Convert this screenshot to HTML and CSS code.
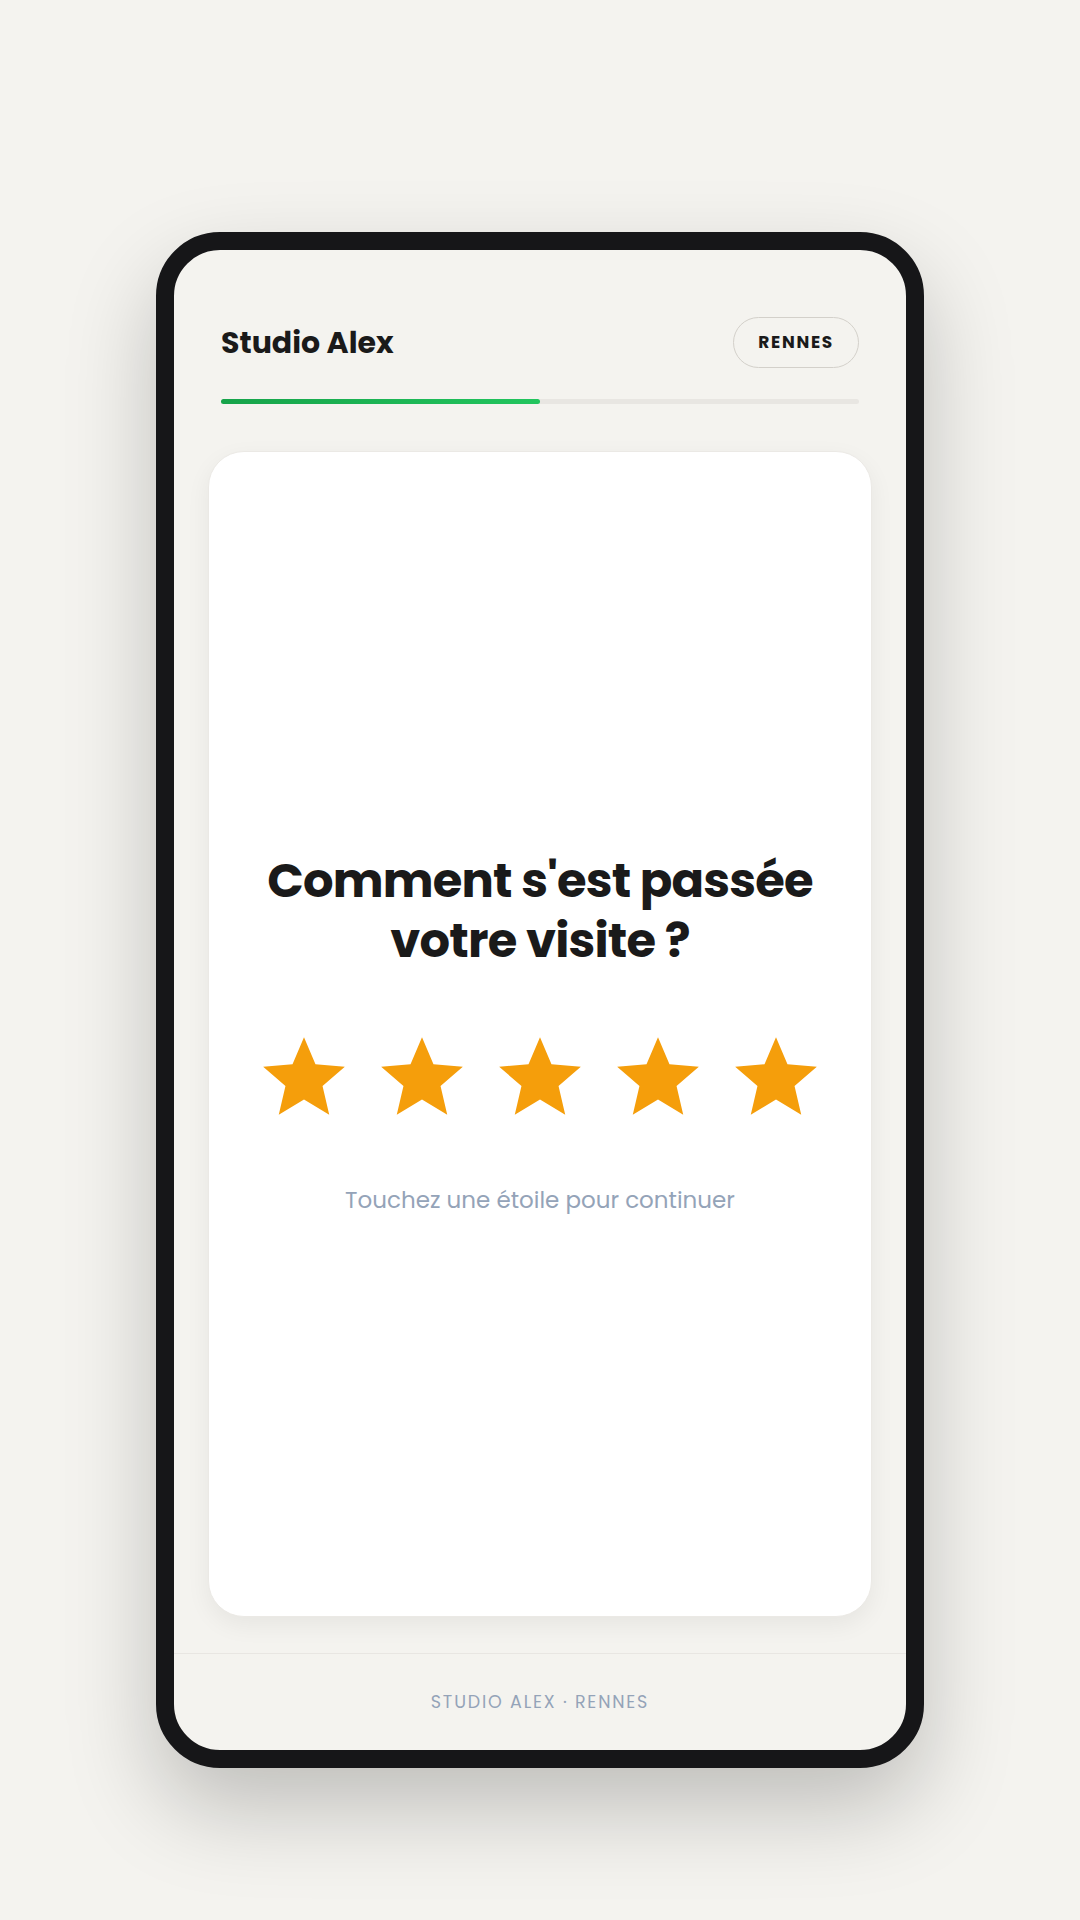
FILE: index.html
```html
<!DOCTYPE html>
<html lang="fr">
<head>
    <meta charset="UTF-8">
    <title>Studio Alex</title>
    <link rel="stylesheet" href="styles.css">
</head>
<body>
<div class="phone">
    <div class="top">
        <div class="bar">
            <h1 class="brand">Studio Alex</h1>
            <span class="city">RENNES</span>
        </div>
        <div class="progress"><div class="fill" style="width: 50%"></div></div>
    </div>
    <div class="main">
        <div class="card">
            <h2 class="question">Comment s'est passée<br>votre visite ?</h2>
            <div class="stars">
                <svg class="star" viewBox="0 0 24 24"><path d="M12 2l2.81 6.63L22 9.24l-5.46 4.73L18.18 21 12 17.27 5.82 21l1.64-7.03L2 9.24l7.19-.61z"/></svg>
                <svg class="star" viewBox="0 0 24 24"><path d="M12 2l2.81 6.63L22 9.24l-5.46 4.73L18.18 21 12 17.27 5.82 21l1.64-7.03L2 9.24l7.19-.61z"/></svg>
                <svg class="star" viewBox="0 0 24 24"><path d="M12 2l2.81 6.63L22 9.24l-5.46 4.73L18.18 21 12 17.27 5.82 21l1.64-7.03L2 9.24l7.19-.61z"/></svg>
                <svg class="star" viewBox="0 0 24 24"><path d="M12 2l2.81 6.63L22 9.24l-5.46 4.73L18.18 21 12 17.27 5.82 21l1.64-7.03L2 9.24l7.19-.61z"/></svg>
                <svg class="star" viewBox="0 0 24 24"><path d="M12 2l2.81 6.63L22 9.24l-5.46 4.73L18.18 21 12 17.27 5.82 21l1.64-7.03L2 9.24l7.19-.61z"/></svg>
            </div>
            <p class="hint">Touchez une étoile pour continuer</p>
        </div>
    </div>
    <div class="foot">STUDIO ALEX · RENNES</div>
</div>
</body>
</html>
```

FILE: styles.css
```css
* {
    margin: 0;
    padding: 0;
    box-sizing: border-box;
}

html {
    background-color: #f4f3ef;
}

body {
    min-height: 100vh;
    font-family: Poppins, Inter, "Noto Sans", sans-serif;
    color: #1a1a1a;
    display: flex;
    justify-content: center;
    align-items: flex-start;
    padding-top: 232px;
}

.phone {
    width: 768px;
    height: 1536px;
    border: 18px solid #161618;
    border-radius: 64px;
    background-color: #f4f3ef;
    box-shadow: 0 40px 90px rgba(0, 0, 0, .22);
    overflow: hidden;
    display: flex;
    flex-direction: column;
}

.top {
    padding: 67px 47px 0;
}

.bar {
    display: flex;
    justify-content: space-between;
    align-items: center;
}

.brand {
    font-size: 30px;
    font-weight: 700;
}

.city {
    height: 51px;
    line-height: 48px;
    padding: 0 24px;
    border: 1.5px solid #d3d0ca;
    border-radius: 26px;
    font-size: 17px;
    font-weight: 700;
    letter-spacing: 1.7px;
}

.progress {
    margin-top: 31px;
    height: 5px;
    border-radius: 3px;
    background-color: #e8e6e2;
}

.progress .fill {
    height: 100%;
    border-radius: 3px;
    background: linear-gradient(90deg, #16a34a, #22c55e);
}

.main {
    flex: 1;
    display: flex;
    padding: 47px 34px 36px;
}

.card {
    flex: 1;
    background-color: #fff;
    border: 1px solid #ebe9e5;
    border-radius: 36px;
    box-shadow: 0 8px 24px rgba(0, 0, 0, .06);
    display: flex;
    flex-direction: column;
    align-items: center;
    justify-content: center;
    text-align: center;
}

.question {
    font-size: 48px;
    font-weight: 700;
    line-height: 60px;
    letter-spacing: -0.8px;
}

.stars {
    display: flex;
    gap: 20px;
    margin-top: 58px;
}

.star {
    width: 98px;
    height: 98px;
    fill: #f59e0b;
}

.hint {
    margin-top: 56px;
    font-size: 23px;
    color: #94a3b8;
}

.foot {
    height: 97px;
    border-top: 1px solid #e8e6e2;
    display: flex;
    align-items: center;
    justify-content: center;
    font-size: 17.5px;
    letter-spacing: 1.8px;
    color: #94a3b8;
}
```
